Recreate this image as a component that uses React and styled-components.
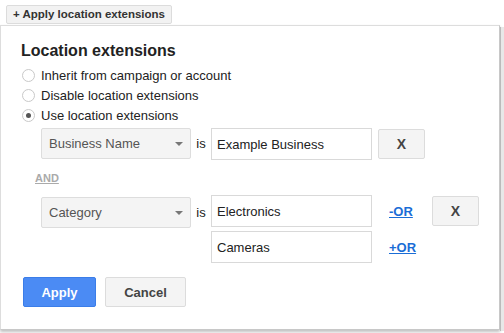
import React from "react";
import styled, { createGlobalStyle } from "styled-components";

const Global = createGlobalStyle`
  html, body { margin: 0; padding: 0; background: #fff; }
  body { font-family: "Liberation Sans", Arial, sans-serif; color: #222; overflow: hidden; }
`;

const Page = styled.div`
  width: 504px;
  height: 333px;
  position: relative;
  display: flex;
  flex-direction: column;
`;

const TopBar = styled.div`
  padding: 4px 0 0 6px;
  height: 21px;
  box-sizing: border-box;
`;

const TopButton = styled.button`
  height: 19px;
  padding: 0;
  border: 1px solid #dcdcdc;
  border-radius: 2px;
  background: #f2f2f2;
  font: bold 11.5px "Liberation Sans", Arial, sans-serif;
  color: #333;
  box-sizing: border-box;
  width: 166px;
  text-align: center;
`;

const Dialog = styled.div`
  margin-top: 4px;
  width: 500px;
  height: 305px;
  box-sizing: border-box;
  background: #fff;
  border: 1px solid #c8c8c8;
  border-left-color: #ddd;
  border-top-color: #ddd;
  box-shadow: 0 2px 3px rgba(0, 0, 0, 0.25);
  padding: 15px 0 0 20px;
`;

const Title = styled.h2`
  margin: 0 0 4px 0;
  font: bold 16px "Liberation Sans", Arial, sans-serif;
  color: #222;
  line-height: 20px;
`;

const RadioRow = styled.label`
  display: flex;
  align-items: center;
  height: 20px;
  font-size: 13px;
  color: #222;
`;

const Radio = styled.span`
  width: 13px;
  height: 13px;
  border-radius: 50%;
  border: 1px solid #c9c9c9;
  box-sizing: border-box;
  margin: 0 6px 0 1px;
  background: #fff;
  display: flex;
  align-items: center;
  justify-content: center;
  &::after {
    content: "";
    width: 5px;
    height: 5px;
    border-radius: 50%;
    background: ${(p) => (p.$checked ? "#555" : "transparent")};
  }
`;

const Conditions = styled.div`
  padding-left: 20px;
  margin-top: 3px;
  display: flex;
  flex-direction: column;
`;

const CondRow = styled.div`
  display: flex;
  align-items: flex-start;
  height: 32px;
  margin-top: ${(p) => p.$mt || 0}px;
`;

const Select = styled.div`
  width: 150px;
  height: 31px;
  box-sizing: border-box;
  border: 1px solid #ddd;
  border-radius: 2px;
  background: #f4f4f4;
  display: flex;
  align-items: center;
  justify-content: space-between;
  padding: 0 7px 0 7px;
  font-size: 13px;
  color: #555;
  margin-top: ${(p) => p.$mt || 0}px;
`;

const Arrow = styled.span`
  width: 0;
  height: 0;
  border-left: 4px solid transparent;
  border-right: 4px solid transparent;
  border-top: 4px solid #777;
`;

const Is = styled.span`
  width: 20px;
  height: 31px;
  display: flex;
  align-items: center;
  justify-content: center;
  font-size: 13px;
  color: #222;
  margin-top: ${(p) => p.$mt || 0}px;
`;

const Spacer = styled.div`
  width: 170px;
`;

const Input = styled.div`
  width: 161px;
  height: 32px;
  box-sizing: border-box;
  border: 1px solid #d9d9d9;
  display: flex;
  align-items: center;
  padding-left: 5px;
  font-size: 13px;
  color: #222;
  background: #fff;
`;

const XButton = styled.button`
  width: 47px;
  height: 30px;
  box-sizing: border-box;
  border: 1px solid #dcdcdc;
  border-radius: 2px;
  background: #f4f4f4;
  font: bold 14px "Liberation Sans", Arial, sans-serif;
  color: #444;
  margin-left: ${(p) => p.$ml}px;
  margin-top: 1px;
`;

const OrLink = styled.a`
  font: bold 13px "Liberation Sans", Arial, sans-serif;
  color: #1a6dd6;
  text-decoration: underline;
  margin-left: 17px;
  width: 28px;
  height: 32px;
  display: flex;
  align-items: center;
`;

const And = styled.a`
  font: bold 11px "Liberation Sans", Arial, sans-serif;
  color: #aaa;
  text-decoration: underline;
  margin: 12px 0 0 -6px;
  height: 13px;
  line-height: 13px;
  align-self: flex-start;
`;

const Actions = styled.div`
  display: flex;
  gap: 9px;
  margin-top: 14px;
  margin-left: 2px;
`;

const ActionButton = styled.button`
  height: 30px;
  width: ${(p) => p.$w}px;
  box-sizing: border-box;
  border-radius: 2px;
  font: bold 13px "Liberation Sans", Arial, sans-serif;
  border: 1px solid ${(p) => (p.$primary ? "#3b7de8" : "#dcdcdc")};
  background: ${(p) => (p.$primary ? "#4b8bf4" : "#f4f4f4")};
  color: ${(p) => (p.$primary ? "#fff" : "#444")};
`;

const EdgeStrip = styled.div`
  position: absolute;
  right: 0;
  top: 27px;
  width: 3px;
  height: 304px;
  background: #e8e8e8;
  border-left: 1px solid #bbb;
`;

export default function App() {
  return (
    <Page>
      <Global />
      <EdgeStrip />
      <TopBar>
        <TopButton>+ Apply location extensions</TopButton>
      </TopBar>
      <Dialog>
        <Title>Location extensions</Title>
        <RadioRow><Radio />Inherit from campaign or account</RadioRow>
        <RadioRow><Radio />Disable location extensions</RadioRow>
        <RadioRow><Radio $checked />Use location extensions</RadioRow>
        <Conditions>
          <CondRow>
            <Select>Business Name<Arrow /></Select>
            <Is>is</Is>
            <Input>Example Business</Input>
            <XButton $ml={6}>X</XButton>
          </CondRow>
          <And>AND</And>
          <CondRow $mt={10}>
            <Select $mt={2}>Category<Arrow /></Select>
            <Is $mt={2}>is</Is>
            <Input>Electronics</Input>
            <OrLink>-OR</OrLink>
            <XButton $ml={15}>X</XButton>
          </CondRow>
          <CondRow $mt={4}>
            <Spacer />
            <Input>Cameras</Input>
            <OrLink>+OR</OrLink>
          </CondRow>
        </Conditions>
        <Actions>
          <ActionButton $primary $w={73}>Apply</ActionButton>
          <ActionButton $w={81}>Cancel</ActionButton>
        </Actions>
      </Dialog>
    </Page>
  );
}
